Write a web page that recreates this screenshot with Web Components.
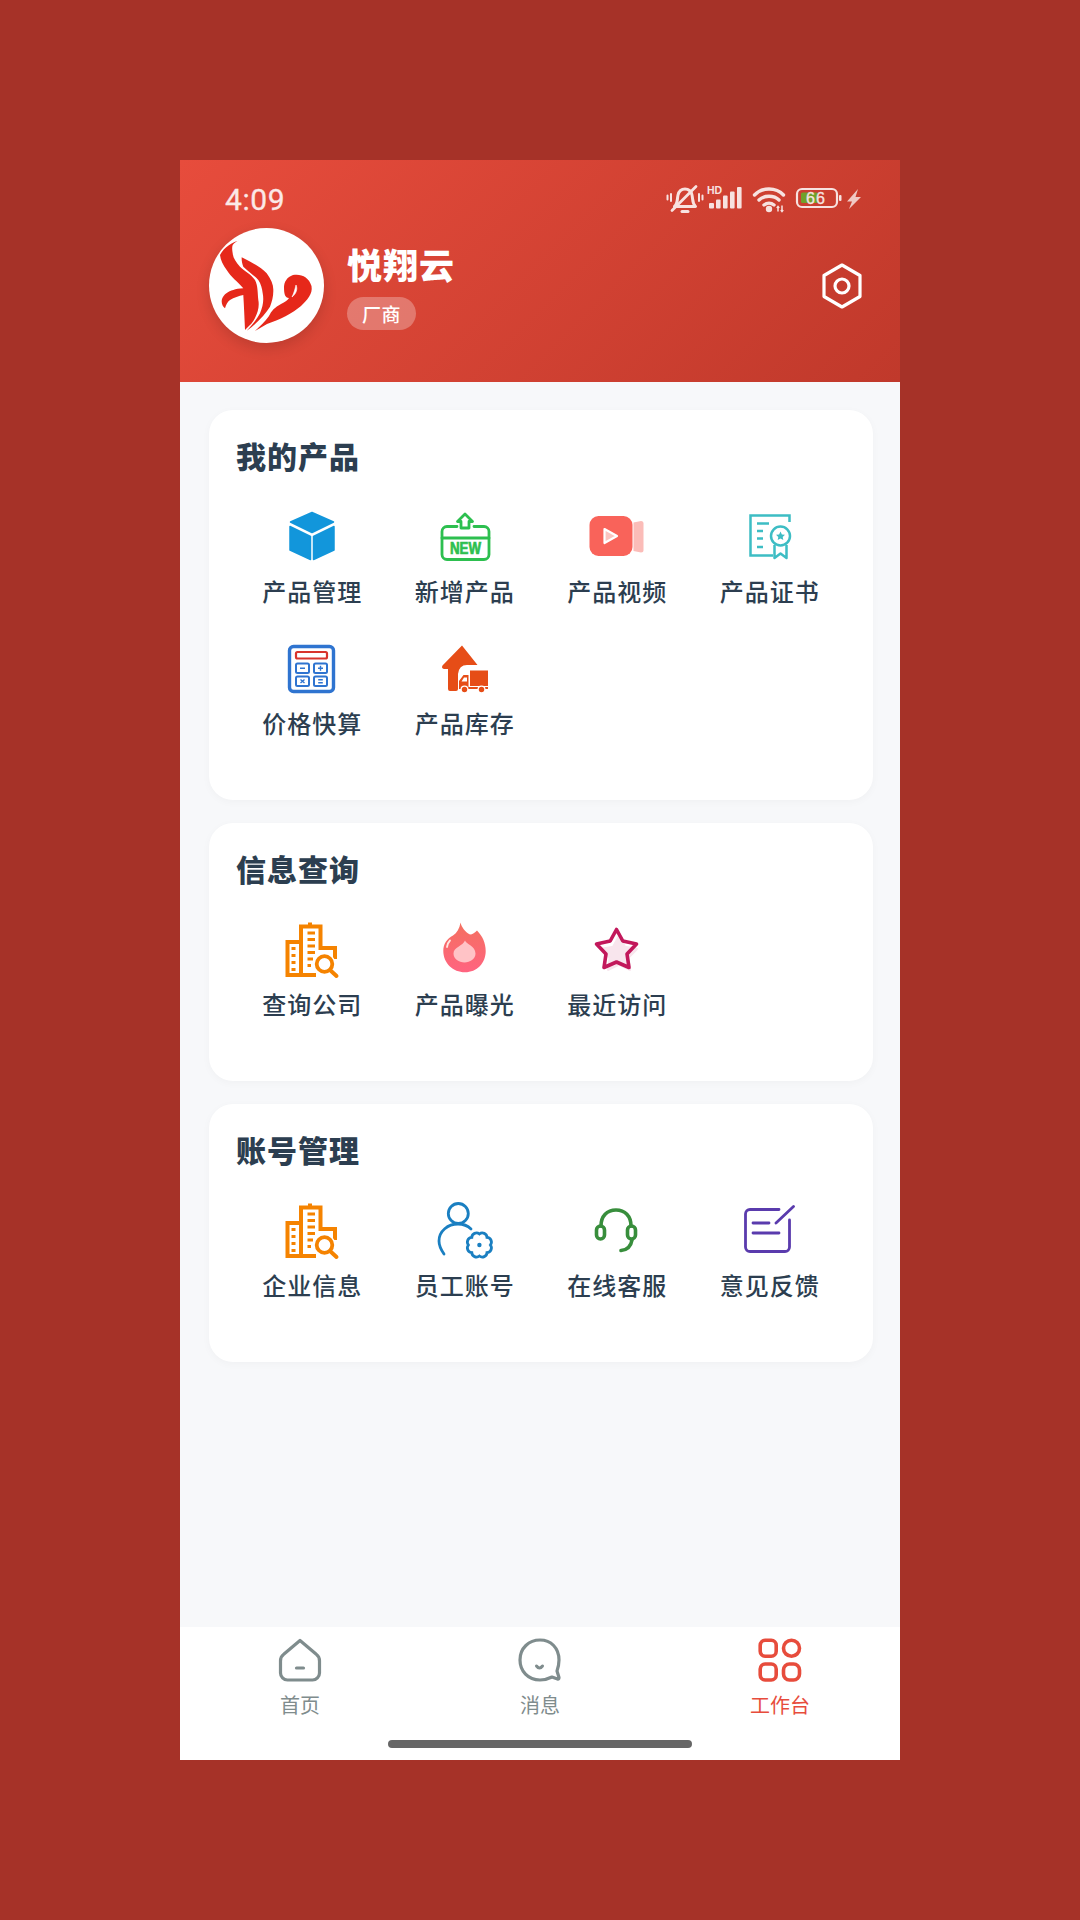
<!DOCTYPE html>
<html lang="zh">
<head>
<meta charset="utf-8">
<title>工作台</title>
<style>
  html, body { margin: 0; padding: 0; }
  body {
    width: 1080px;
    height: 1920px;
    background: #a63228;
    font-family: "Noto Sans CJK SC", "Noto Sans", sans-serif;
    overflow: hidden;
  }
</style>
</head>
<body>
<app-phone>
  <profile-header slot="header" name="悦翔云" badge="厂商"></profile-header>
  <feature-card title="我的产品">
    <feature-item icon="cube" label="产品管理"></feature-item>
    <feature-item icon="new" label="新增产品"></feature-item>
    <feature-item icon="video" label="产品视频"></feature-item>
    <feature-item icon="cert" label="产品证书"></feature-item>
    <feature-item icon="calc" label="价格快算"></feature-item>
    <feature-item icon="stock" label="产品库存"></feature-item>
  </feature-card>
  <feature-card title="信息查询">
    <feature-item icon="company" label="查询公司"></feature-item>
    <feature-item icon="flame" label="产品曝光"></feature-item>
    <feature-item icon="star" label="最近访问"></feature-item>
  </feature-card>
  <feature-card title="账号管理">
    <feature-item icon="company" label="企业信息"></feature-item>
    <feature-item icon="staff" label="员工账号"></feature-item>
    <feature-item icon="headset" label="在线客服"></feature-item>
    <feature-item icon="feedback" label="意见反馈"></feature-item>
  </feature-card>
  <tab-bar slot="footer">
    <tab-item icon="home" label="首页"></tab-item>
    <tab-item icon="chat" label="消息"></tab-item>
    <tab-item icon="apps" label="工作台" active></tab-item>
  </tab-bar>
</app-phone>

<script>
const ICONS = {
  cube: `<g fill="#1296db" stroke="#1296db" stroke-width="1.5" stroke-linejoin="round">
      <path d="M32 4.5 53.5 14 32 24.5 10.5 14z"/>
      <path d="M10 18.5 30.5 28.5V51.5L10 42z"/>
      <path d="M33.5 28.5 54 18.5V42L33.5 51.5z"/></g>`,
  new: `<g fill="none" stroke="#2dbf4f" stroke-width="2.8" stroke-linejoin="round" stroke-linecap="round">
      <path d="M32 6 39.5 13.500H36V20H28V13.500H24.500z"/>
      <path d="M24 18.500H14a5 5 0 0 0-5 5v23a5 5 0 0 0 5 5h37a5 5 0 0 0 5-5V23.500a5 5 0 0 0-5-5H41"/>
      <path d="M9 30H56"/></g>
      <text x="17" y="45.500" textLength="31" lengthAdjust="spacingAndGlyphs" font-family="Liberation Sans, sans-serif" font-weight="700" font-size="16" fill="#2dbf4f" stroke="#2dbf4f" stroke-width=".7">NEW</text>`,
  video: `<path d="M48.5 14.5 56 13q2.500 0 2.500 2.500V42q0 2.500-2.500 2.500L48.500 43z" fill="#fbbcb8"/>
      <rect x="4.500" y="8" width="43" height="40" rx="9" fill="#f9635a"/>
      <path d="M19.500 21 32 28 19.500 35z" fill="#fbc4c0" stroke="#fff" stroke-width="2.200" stroke-linejoin="round"/>`,
  cert: `<g fill="none" stroke="#3dbdc4" stroke-width="2.500">
      <path d="M51.500 14V7.500H12.500V47.500H35"/>
      <path d="M19 15.500H31M19 23H25M19 30.500H25M19 39H25"/>
      <circle cx="42.500" cy="28" r="9.500"/>
      <path d="M36.500 37V50L42.500 45.500 48.500 50V37" stroke-linejoin="round"/></g>
      <path d="M42.500 23.500l1.400 2.900 3.100.4-2.300 2.100.6 3.100-2.800-1.500-2.800 1.500.6-3.100-2.300-2.100 3.100-.4z" fill="#3dbdc4"/>`,
  calc: `<rect x="9.500" y="6.500" width="44" height="45" rx="4" fill="#fff" stroke="#2f74d0" stroke-width="3.400"/>
      <rect x="16" y="12" width="31" height="6.500" rx="1.500" fill="#fff" stroke="#d8342c" stroke-width="2.200"/>
      <g fill="none" stroke="#2f74d0" stroke-width="2">
      <rect x="16" y="23.500" width="13" height="9.500" rx="1.500"/><rect x="34" y="23.500" width="13" height="9.500" rx="1.500"/>
      <rect x="16" y="36.500" width="13" height="9.500" rx="1.500"/><rect x="34" y="36.500" width="13" height="9.500" rx="1.500"/>
      <path d="M20 28.200H25M38 28.200H43M40.500 25.800V30.700M20.500 39.500 24.500 43M24.500 39.500 20.500 43M38.200 39.800H42.800M38.200 42.700H42.800" stroke-width="1.400"/></g>`,
  stock: `<path d="M29 5.500 44.500 25H34Q26 25 25 34V49Q25 51 23 51H17Q15 51 15 49V29H11Q8 28 9.500 25.500z" fill="#e64d17"/>
      <rect x="37" y="30.500" width="18" height="15.500" fill="#e64d17"/>
      <path d="M35.500 35H30.500L26 41V49H55V47H35.500z" fill="#e64d17"/>
      <path d="M31 37.500H34V41.500H28.500z" fill="#fff"/>
      <circle cx="31.500" cy="49.500" r="3.400" fill="#e64d17" stroke="#fff" stroke-width="1.300"/>
      <circle cx="48.500" cy="49.500" r="3.400" fill="#e64d17" stroke="#fff" stroke-width="1.300"/>`,
  company: `<g fill="none" stroke="#f58300" stroke-width="4">
      <path d="M30 1.500V6"/><path d="M21 54V5.500H40.500V27H55V38"/>
      <path d="M21 21H7.500V54H36"/>
      <path d="M27.500 12H35M27.500 18.500H35M27.500 25H35M27.500 31.500H35M27.500 38H33M27.500 44.500H31" stroke-width="3.200"/>
      <path d="M13.500 26V29M13.500 33V36M13.500 40V43M13.500 47V50" stroke-width="4"/></g>
      <circle cx="44.500" cy="43" r="8" fill="#fff" stroke="#fff" stroke-width="6"/>
      <circle cx="44.500" cy="43" r="7.800" fill="#fff" stroke="#f58300" stroke-width="3.800"/>
      <path d="M50 49 56.500 55" stroke="#f58300" stroke-width="4" stroke-linecap="round"/>`,
  flame: `<defs><linearGradient id="f" x1="0" y1="0" x2="0" y2="1"><stop offset="0" stop-color="#f4705f"/><stop offset="1" stop-color="#ff6480"/></linearGradient></defs>
      <path d="M27.500 1.500C28.500 6 32 11 37 13.500 39.500 13.500 42 11.500 44 9.500 49.500 15 52.700 22 52.700 30 52.700 42 44 51.300 32 51.300 20 51.300 10.300 42 10.300 30 10.300 23 14 17.500 20 14.500 24 12 26.500 7.500 27.500 1.500Z" fill="url(#f)"/>
      <path d="M32 19.500C33 23 42.500 25 42.500 32.500 42.500 38 37 41.500 31.500 41.500 26 41.500 20.500 38 20.500 32.500 20.500 26 30 25 32 19.500Z" fill="#ffc3c6"/>
      <path d="M14 26C14.500 23 15.500 21 17 19.500" fill="none" stroke="#ffe6e2" stroke-width="1.800" stroke-linecap="round"/>`,
  star: `<path d="M31 7.500 37.800 20.200 51.900 22.700 41.900 33 43.900 47.300 31 41 18.100 47.300 20.100 33 10.100 22.700 24.200 20.200z" transform="translate(8 9) scale(.84)" fill="#f8e5ed" stroke="#f8e5ed" stroke-width="3" stroke-linejoin="round"/>
      <path d="M31.500 8.500 37.800 20 51.500 23 42 33 44 46.500 31.500 41 19 46.500 21 33 11.500 23 25.200 20z" fill="none" stroke="#c2185b" stroke-width="3.600" stroke-linejoin="round"/>`,
  staff: `<g fill="none" stroke="#1a7fc1" stroke-width="2.800" stroke-linecap="round">
      <circle cx="25.300" cy="11.500" r="10"/>
      <path d="M11 52C7.500 47 6 43 6 39 6 29 15 22 25 22 30 22 35 24 38 27"/></g>
      <path d="M57.400 43A4.700 4.700 0 0 1 54 50.600 4.700 4.700 0 0 1 46.400 54 4.700 4.700 0 0 1 38.800 50.600 4.700 4.700 0 0 1 35.400 43 4.700 4.700 0 0 1 38.800 35.400 4.700 4.700 0 0 1 46.400 32 4.700 4.700 0 0 1 54 35.400 4.700 4.700 0 0 1 57.400 43Z" fill="#fff" stroke="#1a7fc1" stroke-width="2.800"/>
      <circle cx="46.400" cy="43" r="2.200" fill="#1a7fc1"/>`,
  headset: `<g fill="none" stroke="#388e3c" stroke-width="3.600" stroke-linecap="round">
      <path d="M16 24C16 14 22 8 31 8 40 8 46 14 46 24"/>
      <rect x="11.500" y="24" width="8" height="13" rx="4"/>
      <rect x="42.500" y="24" width="8" height="13" rx="4"/>
      <path d="M47 38C46 44 42 48 36 48.500"/></g>`,
  feedback: `<g fill="none" stroke="#5a3bad" stroke-width="2.800" stroke-linecap="round" stroke-linejoin="round">
      <path d="M41 7.500H12A4.500 4.500 0 0 0 7.500 12V45A4.500 4.500 0 0 0 12 49.500H47A4.500 4.500 0 0 0 51.500 45V18"/>
      <path d="M38 21 55.500 4.500M15 21H31M15 31H41"/></g>`,
  home: `<path d="M22 2.500 38 16Q41.500 18.500 41.500 23V35a7 7 0 0 1-7 7H9.500a7 7 0 0 1-7-7V23Q2.500 18.500 6 16Z" fill="none" stroke="#7f8c8d" stroke-width="3.200" stroke-linejoin="round"/>
      <path d="M18.500 30H25.500" stroke="#7f8c8d" stroke-width="3.200" stroke-linecap="round"/>`,
  chat: `<path d="M22 2C33 2 41 10 41 22 41 26 40 30 39 33L41 39.500Q41 41.500 39.500 41L34 39C30 41 27 42 22 42 10 42 2 33 2 22 2 10 11 2 22 2Z" fill="none" stroke="#7f8c8d" stroke-width="3.200" stroke-linejoin="round"/>
      <path d="M18.500 28Q21.500 32 24.500 28" fill="none" stroke="#7f8c8d" stroke-width="3" stroke-linecap="round"/>`,
  apps: `<g fill="none" stroke="#e74c3c" stroke-width="3.600">
      <rect x="2.200" y="2.200" width="16" height="16" rx="5"/><circle cx="33.500" cy="10.200" r="8"/>
      <rect x="2.200" y="26" width="16" height="16" rx="5"/><rect x="25.500" y="26" width="16" height="16" rx="6"/></g>`
};

class UiIcon extends HTMLElement {
  connectedCallback() {
    const w = this.getAttribute('w') ?? 64;
    const h = this.getAttribute('h') ?? 56;
    this.attachShadow({ mode: 'open' });
    this.shadowRoot.innerHTML = `
      <style>:host { display: block; width: ${w}px; height: ${h}px; } svg { display: block; overflow: visible; }</style>
      <svg width="${w}" height="${h}" viewBox="0 0 ${w} ${h}">${ICONS[this.getAttribute('name')]}</svg>`;
  }
}
customElements.define('ui-icon', UiIcon);

class StatusBar extends HTMLElement {
  connectedCallback() {
    this.attachShadow({ mode: 'open' });
    this.shadowRoot.innerHTML = `
      <style>
        :host {
          display: flex; justify-content: space-between; align-items: center;
          height: 34px; padding: 0 36px 0 45px; color: #fff;
        }
        .time { font: 400 30px/34px Roboto, sans-serif; letter-spacing: .6px; opacity: .88; -webkit-text-stroke: .3px #fff; }
        svg { display: block; opacity: .85; }
      </style>
      <span class="time">4:09</span>
      <svg width="200" height="34" viewBox="0 0 200 34">
        <g fill="none" stroke="#fff" stroke-width="3" stroke-linecap="round" stroke-linejoin="round">
          <path d="M10.500 23.500C14 20.500 13 16 14 12 15 8 18 6 21 6 24 6 27 8 28 12 29 16 28 20 31.500 23.500H10.500Z"/>
          <path d="M8 27.500 32 3.500" stroke-width="2.800"/>
          <path d="M18 28.500H24" stroke-width="3"/>
          <path d="M7 11V18M3.500 12.500V16.500M35 11V18M38.500 12.500V16.500" stroke-width="2"/>
        </g>
        <text x="43" y="11" font-family="Liberation Sans, sans-serif" font-weight="700" font-size="10.500" fill="#fff">HD</text>
        <g fill="#fff">
          <rect x="45" y="20" width="5" height="5.500" rx="1"/><rect x="52" y="16.500" width="4.600" height="9" rx="1"/>
          <rect x="59" y="12.500" width="4.600" height="13" rx="1"/><rect x="66" y="8.500" width="4.600" height="17" rx="1"/>
          <rect x="73" y="4" width="4.600" height="21.500" rx="1"/>
        </g>
        <g fill="none" stroke="#fff" stroke-width="3.400" stroke-linecap="round">
          <path d="M90.500 12C98 4 112 4 119.500 12"/><path d="M95 17C100 12 110 12 115 17"/><path d="M100 22C103 19.500 107 19.500 110 22"/>
        </g>
        <circle cx="105" cy="26" r="3.200" fill="#fff"/>
        <path d="M114 24V28.500M112.800 25 114 23.500 115.200 25M118 22.500V28.500M116.800 27 118 28.500 119.200 27" stroke="#fff" stroke-width="1.500" fill="none"/>
        <rect x="133" y="6" width="40" height="18" rx="5" fill="none" stroke="#fff" stroke-width="2.200"/>
        <rect x="137" y="9.500" width="17" height="10.500" rx="1.500" fill="#62b32a"/>
        <text x="152" y="21" text-anchor="middle" font-family="Liberation Sans, sans-serif" font-size="16" fill="#fff" stroke="#fff" stroke-width=".3" letter-spacing="1">66</text>
        <rect x="175" y="12" width="2.500" height="6" rx="1" fill="#fff"/>
        <path d="M194 6 183 18.500H188L185 26 197 14H191.500Z" fill="#fff" opacity=".85"/>
      </svg>`;
  }
}
customElements.define('status-bar', StatusBar);

class ProfileHeader extends HTMLElement {
  connectedCallback() {
    const name = this.getAttribute('name') ?? '';
    const badge = this.getAttribute('badge') ?? '';
    this.attachShadow({ mode: 'open' });
    this.shadowRoot.innerHTML = `
      <style>
        :host {
          display: block; height: 222px; padding-top: 23px; box-sizing: border-box;
          background: linear-gradient(135deg, #e74c3c, #c0392b);
          color: #fff;
        }
        .row { display: flex; align-items: center; margin-top: 11px; padding: 0 37px 0 29px; }
        .logo {
          flex: none; width: 115px; height: 115px; border-radius: 50%; background: #fff;
          box-shadow: 0 5px 14px rgba(0,0,0,.14);
        }
        .logo svg { display: block; }
        .info { flex: 1; margin-left: 23px; }
        .name { font-size: 35px; line-height: 44px; font-weight: 900; letter-spacing: 1px; }
        .badge {
          display: inline-block; margin-top: 11px; height: 33px; line-height: 33px; padding: 0 15px;
          border-radius: 17px; background: rgba(255,255,255,.28);
          font-size: 19px; font-weight: 500; letter-spacing: .5px;
        }
        .gear { flex: none; display: block; }
      </style>
      <status-bar></status-bar>
      <div class="row">
        <div class="logo">
          <svg width="115" height="115" viewBox="0 0 115 115" fill="#e6281a">
            <path d="M31 12C24 14 15 19 11 27 11.500 32 14 37 17.700 42 22 49 29 54 34.300 60.300 30 60.500 27 61 24.300 62 19 63.500 15 66 13 71 12 75 13.500 78.500 16 80.300 17 76.500 18.500 74 21 72 25 69.500 30 68 34.300 67 35 78 35.500 90 36 102 41 97 44.500 94 46 90 49 84 50.500 78 49.300 72 48.500 64 49 58 46 52 42 46 35 43 31 38.700 27 34 24 30 23.700 25.300 23 21 23 19 23.700 17 25.500 14.500 28 13 31 12Z"/>
            <path d="M32.700 29.300C42 34 52 39 57.700 45.300 62 51 64.500 57 64.300 62 64.500 68 63 74 61 78.700 56 87 47 96 37.700 102.700 44 96 48 91 51 85.300 54 78 55 72 53.700 65.300 53 60 52 56 49.300 52 45 47 39 43.500 34.300 38.700 33 35.500 32.500 32 32.700 29.300Z"/>
            <path d="M46 103C50 99 56 94 60 88 62 83 66 79 72 76 76 74 79 72 80 70 76 70 75 66 75 59 75 54 78 49 84 47 92 45.500 100 49 102.500 58 104 66 98 72 92 78 84 85 70 92 58 96 54 98 50 101 46 103Z"/>
            <path d="M87 57C89 61 87 66 83 69 85 65 86 61 87 57Z" fill="#fff" stroke="#fff" stroke-width=".6"/>
          </svg>
        </div>
        <div class="info">
          <div class="name">${name}</div>
          <div class="badge">${badge}</div>
        </div>
        <svg class="gear" width="42" height="46" viewBox="0 0 42 46" fill="none" stroke="#fff" stroke-width="3.200" stroke-linejoin="round">
          <path d="M21 2 39 12.500V33.500L21 44 3 33.500V12.500Z"/>
          <circle cx="21" cy="23" r="7"/>
        </svg>
      </div>`;
  }
}
customElements.define('profile-header', ProfileHeader);

class FeatureItem extends HTMLElement {
  connectedCallback() {
    this.attachShadow({ mode: 'open' });
    this.shadowRoot.innerHTML = `
      <style>
        :host { display: flex; flex-direction: column; align-items: center; color: #2c3e50; }
        .label { margin-top: 10px; font-size: 24px; line-height: 34px; letter-spacing: 1px; white-space: nowrap; font-weight: 500; }
      </style>
      <ui-icon name="${this.getAttribute('icon')}"></ui-icon>
      <div class="label">${this.getAttribute('label')}</div>`;
  }
}
customElements.define('feature-item', FeatureItem);

class FeatureCard extends HTMLElement {
  connectedCallback() {
    this.attachShadow({ mode: 'open' });
    this.shadowRoot.innerHTML = `
      <style>
        :host {
          display: block; background: #fff; border-radius: 24px;
          padding: 25px 27px 60px; box-shadow: 0 2px 8px rgba(0,0,0,.03);
        }
        h2 { margin: 0 0 33px; font-size: 30px; line-height: 40px; font-weight: 900; letter-spacing: 1px; color: #2c3e50; }
        .grid { display: grid; grid-template-columns: repeat(4, 1fr); row-gap: 31.500px; }
      </style>
      <h2>${this.getAttribute('title')}</h2>
      <div class="grid"><slot></slot></div>`;
  }
}
customElements.define('feature-card', FeatureCard);

class TabItem extends HTMLElement {
  connectedCallback() {
    const color = this.hasAttribute('active') ? '#e74c3c' : '#7f8c8d';
    this.attachShadow({ mode: 'open' });
    this.shadowRoot.innerHTML = `
      <style>
        :host { display: flex; flex-direction: column; align-items: center; flex: 1; color: ${color}; }
        .label { margin-top: 9px; font-size: 20px; line-height: 28px; }
      </style>
      <ui-icon name="${this.getAttribute('icon')}" w="44" h="44"></ui-icon>
      <div class="label">${this.getAttribute('label')}</div>`;
  }
}
customElements.define('tab-item', TabItem);

class TabBar extends HTMLElement {
  connectedCallback() {
    this.attachShadow({ mode: 'open' });
    this.shadowRoot.innerHTML = `
      <style>
        :host { display: block; height: 133px; padding-top: 11px; box-sizing: border-box; background: #fff; }
        .tabs { display: flex; }
        .indicator { width: 304px; height: 8px; margin: 21px auto 0; border-radius: 4px; background: #666; }
      </style>
      <div class="tabs"><slot></slot></div>
      <div class="indicator"></div>`;
  }
}
customElements.define('tab-bar', TabBar);

class AppPhone extends HTMLElement {
  connectedCallback() {
    this.attachShadow({ mode: 'open' });
    this.shadowRoot.innerHTML = `
      <style>
        :host {
          display: flex; flex-direction: column; width: 720px; height: 1600px;
          margin: 160px auto 0; background: #f7f8fa; overflow: hidden;
        }
        .body { flex: 1; display: flex; flex-direction: column; gap: 23px; padding: 28px 27px 0 29px; }
      </style>
      <slot name="header"></slot>
      <div class="body"><slot></slot></div>
      <slot name="footer"></slot>`;
  }
}
customElements.define('app-phone', AppPhone);
</script>
</body>
</html>
